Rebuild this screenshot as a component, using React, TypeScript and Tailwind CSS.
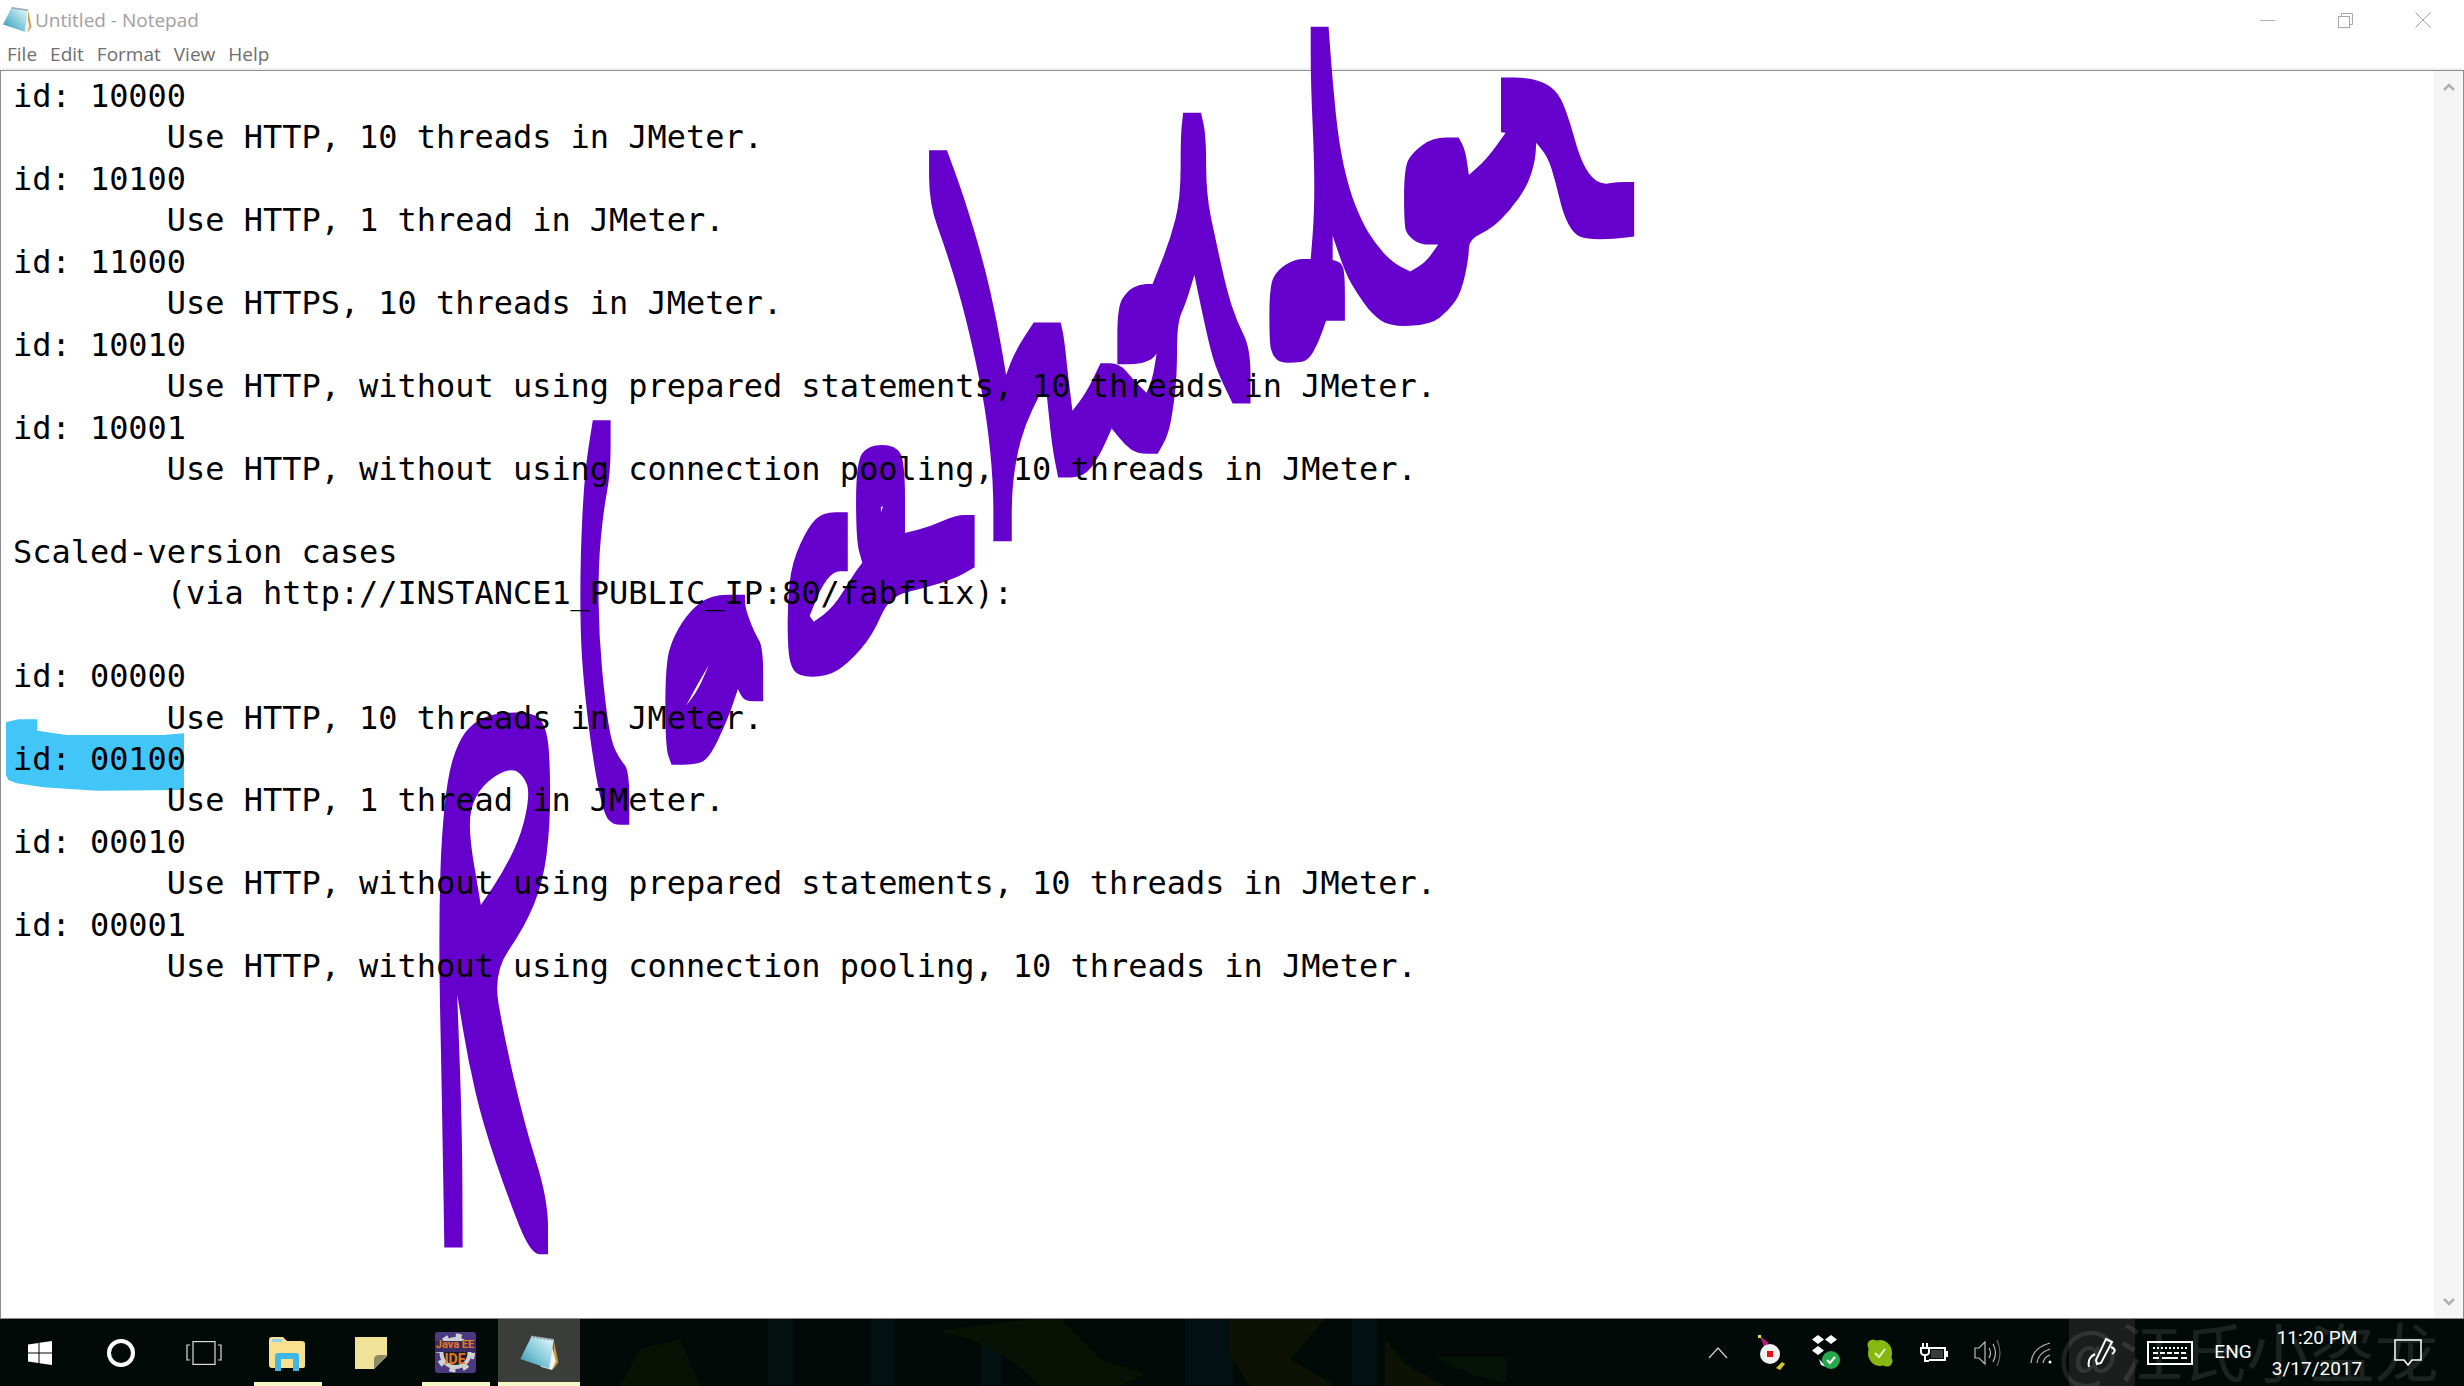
import React from "react";

const lines: string[] = [
  "id: 10000",
  "\tUse HTTP, 10 threads in JMeter.",
  "id: 10100",
  "\tUse HTTP, 1 thread in JMeter.",
  "id: 11000",
  "\tUse HTTPS, 10 threads in JMeter.",
  "id: 10010",
  "\tUse HTTP, without using prepared statements, 10 threads in JMeter.",
  "id: 10001",
  "\tUse HTTP, without using connection pooling, 10 threads in JMeter.",
  "",
  "Scaled-version cases",
  "\t(via http://INSTANCE1_PUBLIC_IP:80/fabflix):",
  "",
  "id: 00000",
  "\tUse HTTP, 10 threads in JMeter.",
  "id: 00100",
  "\tUse HTTP, 1 thread in JMeter.",
  "id: 00010",
  "\tUse HTTP, without using prepared statements, 10 threads in JMeter.",
  "id: 00001",
  "\tUse HTTP, without using connection pooling, 10 threads in JMeter.",
];

// Rounds the gentle bends of a hand-drawn outline, keeps its sharp corners.
function smooth(d: string): string {
  return d
    .split("Z")
    .filter((s) => s.trim())
    .map((sub) => {
      const n = (sub.match(/\d+/g) || []).map(Number);
      const pts: [number, number][] = [];
      for (let i = 0; i < n.length; i += 2) pts.push([n[i], n[i + 1]]);
      const c = pts.length;
      const mid = (a: [number, number], b: [number, number]) => `${(a[0] + b[0]) / 2} ${(a[1] + b[1]) / 2}`;
      let out = `M${mid(pts[c - 1], pts[0])}`;
      for (let i = 0; i < c; i++) {
        const a = pts[(i + c - 1) % c];
        const p = pts[i];
        const b = pts[(i + 1) % c];
        const v1 = [p[0] - a[0], p[1] - a[1]];
        const v2 = [b[0] - p[0], b[1] - p[1]];
        const cos = (v1[0] * v2[0] + v1[1] * v2[1]) / (Math.hypot(v1[0], v1[1]) * Math.hypot(v2[0], v2[1]) || 1);
        if (cos < 0.45) out += ` L${p[0]} ${p[1]} L${mid(p, b)}`;
        else out += ` Q${p[0]} ${p[1]} ${mid(p, b)}`;
      }
      return out + " Z";
    })
    .join(" ");
}

function NotepadIcon({ size, id }: { size: number; id: string }) {
  return (
    <svg width={size} height={size} viewBox="54 44 122 112">
      <defs>
        <linearGradient id={id} x1="0" y1="1" x2="1" y2="0">
          <stop offset="0" stopColor="#2f8fae" />
          <stop offset="0.45" stopColor="#7fc8d8" />
          <stop offset="1" stopColor="#eef9fb" />
        </linearGradient>
      </defs>
      <path d="M160 60 L174 128 L158 150 Z" fill="#c99a3e" />
      <path d="M150 60 L166 125 L155 152 L120 142 Z" fill="#f2f2f2" />
      <path d="M92 50 L160 60 L146 148 L58 118 Z" fill={`url(#${id})`} />
      <path d="M92 50 L160 60" stroke="#8d99a6" strokeWidth="6" />
      <path d="M92 50 L160 60" stroke="#e8e8e8" strokeWidth="3" strokeDasharray="4 7" />
    </svg>
  );
}

function Ink() {
  return (
    <svg className="absolute left-0 top-0 z-0" width="2464" height="1386" viewBox="0 0 2464 1386">
      <path
        transform="translate(0 700) scale(0.3333)"
        fill="#41c6f7"
        d="M18 67 L55 58 L112 58 L112 92 L200 105 L490 105 L552 100 L552 270 L290 272 L130 262 L50 250 L25 240 L18 225 Z"
      />
      <g transform="translate(900 0) scale(0.5102 0.3571)" fill="#6600cc">
        <path d={smooth("M57 421 L92 421 L125 550 L165 740 L190 900 L208 1050 L225 985 L262 903 L315 903 L322 950 L330 1060 L338 1150 L365 1100 L393 1017 L430 1017 L455 1060 L483 1100 L495 1060 L503 990 L495 1005 L470 1020 L426 1020 L426 860 L445 815 L470 795 L495 795 L530 670 L550 555 L550 380 L555 316 L590 316 L600 380 L600 545 L620 680 L640 810 L660 900 L687 975 L687 1130 L652 1130 L625 1050 L610 990 L590 860 L577 770 L560 850 L543 905 L543 1050 L535 1150 L525 1220 L505 1271 L465 1271 L440 1245 L415 1200 L390 1280 L360 1337 L310 1337 L298 1250 L288 1110 L272 1110 L245 1190 L228 1280 L219 1380 L219 1516 L183 1516 L183 1350 L170 1170 L150 1020 L122 850 L90 700 L57 570 Z")} />
        <path d={smooth("M724 800 L740 755 L775 725 L805 725 L812 600 L812 450 L805 230 L805 75 L840 75 L848 230 L860 400 L880 530 L905 620 L930 680 L965 735 L1000 760 L1030 735 L1055 685 L1020 685 L995 660 L988 630 L988 470 L1005 425 L1045 385 L1095 385 L1108 420 L1115 490 L1150 445 L1187 372 L1178 370 L1178 217 L1230 217 L1270 235 L1295 270 L1315 350 L1330 430 L1350 490 L1375 517 L1405 510 L1439 510 L1439 662 L1400 670 L1345 670 L1320 655 L1300 600 L1285 510 L1270 440 L1247 400 L1245 450 L1230 520 L1195 590 L1160 640 L1115 670 L1115 720 L1100 820 L1075 870 L1040 910 L960 915 L925 880 L895 820 L873 765 L848 660 L848 728 L865 735 L872 765 L872 898 L835 898 L820 960 L800 1010 L775 1016 L745 1016 L730 995 L724 960 Z")} />
      </g>
      <g transform="translate(400 400) scale(0.4146 0.5612)" fill="#6600cc" fillRule="evenodd">
        <path d={smooth("M465 36 L508 36 L508 130 L490 200 L478 300 L480 420 L495 540 L510 610 L530 640 L553 660 L553 757 L512 757 L490 735 L465 640 L445 520 L435 420 L435 280 L445 130 Z")} />
        <path d={smooth("M640 470 L660 420 L700 375 L750 347 L832 347 L832 370 L855 415 L876 440 L876 537 L830 537 L815 515 L790 570 L745 640 L710 650 L655 650 L640 620 Z M745 472 L715 510 L690 545 L720 515 Z")} />
        <path d={smooth("M935 360 L945 290 L985 225 L1020 200 L1080 200 L1080 305 L1045 305 L1015 335 L988 385 L998 395 L1045 370 L1095 310 L1115 290 L1100 250 L1100 110 L1130 80 L1195 80 L1218 110 L1218 237 L1280 225 L1340 205 L1386 205 L1386 298 L1340 318 L1265 335 L1180 350 L1140 420 L1080 470 L1030 493 L960 493 L940 470 L935 430 Z M1160 190 L1165 190 L1160 200 Z")} />
        <path d={smooth("M107 1510 L100 1200 L95 1030 L95 900 L100 780 L115 670 L140 610 L175 575 L230 557 L330 557 L355 590 L362 650 L362 760 L345 860 L300 940 L225 1020 L250 1130 L300 1290 L357 1425 L357 1522 L315 1522 L260 1420 L200 1290 L165 1180 L138 1060 L150 1300 L151 1510 Z M163 760 L180 705 L225 670 L273 656 L300 672 L313 700 L295 770 L250 840 L195 900 Z")} />
      </g>
    </svg>
  );
}

function Wallpaper() {
  return (
    <svg className="absolute left-0 top-0 opacity-60" width="2464" height="67" viewBox="0 0 2464 67">
      <g fill="#04141a">
        <rect x="768" y="0" width="25" height="67" />
        <rect x="870" y="0" width="24" height="67" />
        <rect x="981" y="10" width="21" height="57" />
        <rect x="1185" y="0" width="48" height="67" />
        <rect x="1352" y="0" width="25" height="67" />
      </g>
      <g fill="#0b1703">
        <path d="M936 12 L1030 0 L1060 0 L1100 40 L1146 55 L1120 67 L1040 67 L1010 40 L970 20 Z" />
        <path d="M640 30 L680 20 L700 67 L620 67 Z" />
      </g>
      <g fill="#151803">
        <path d="M1230 0 L1325 0 L1290 40 L1335 67 L1250 67 L1230 35 Z" />
        <path d="M1385 20 L1405 45 L1445 67 L1385 67 Z" />
      </g>
      <path d="M1433 38 L1506 38 L1506 64 L1470 55 Z" fill="#06180a" />
    </svg>
  );
}

function TaskButton({ active, underline, children }: { active?: boolean; underline?: boolean; children: React.ReactNode }) {
  return (
    <div className={active ? "relative flex h-full w-[82px] items-center justify-center bg-[#3a3d3a]" : "relative flex h-full w-[82px] items-center justify-center"}>
      {children}
      {underline && (
        <div className={active ? "absolute bottom-0 left-0 right-0 h-[4px] bg-[#f7f7c4]" : "absolute bottom-0 left-[8px] right-[6px] h-[4px] bg-[#f7f7c4]"} />
      )}
    </div>
  );
}

function TrayItem({ children }: { children: React.ReactNode }) {
  return <div className="flex h-full w-[54px] items-center justify-center">{children}</div>;
}

function Taskbar() {
  return (
    <div className="relative flex h-[67px] shrink-0 items-center overflow-hidden bg-[#010a06]" style={{ fontFamily: '"Roboto", "Noto Sans", sans-serif' }}>
      <Wallpaper />
      <div className="z-10 flex h-full w-[80px] items-center justify-center">
        <svg width="24" height="24" viewBox="0 0 24 24" fill="#fff">
          <path d="M0 3.5 L10.5 2 V11.5 H0 Z M11.5 1.8 L24 0 V11.5 H11.5 Z M0 12.5 H10.5 V22 L0 20.5 Z M11.5 12.5 H24 V24 L11.5 22.2 Z" />
        </svg>
      </div>
      <div className="z-10 flex h-full w-[82px] items-center justify-center">
        <div className="h-[28px] w-[28px] rounded-full border-[4px] border-white" />
      </div>
      <div className="z-10 flex h-full w-[84px] items-center justify-center">
        <svg width="36" height="24" viewBox="0 0 36 24" fill="none" stroke="#ddd" strokeWidth="1.2">
          <rect x="7" y="0.6" width="22" height="22.8" />
          <path d="M4 4 H1 V19 H4 M32 4 H35 V19 H32" />
        </svg>
      </div>
      <div className="z-10 flex h-full gap-[2px]">
        <TaskButton underline>
          <svg width="36" height="36" viewBox="0 0 36 36">
            <path d="M0 5 Q0 2 3 2 H14 L18 6 H33 Q36 6 36 9 V31 Q36 33 33 33 H3 Q0 33 0 30 Z" fill="#f9e08e" />
            <rect x="3" y="4" width="10" height="3" fill="#8fd3f0" />
            <path d="M6 36 V21 Q6 18 9 18 H27 Q30 18 30 21 V36 H24 V24 H12 V36 Z" fill="#3fb5e8" />
          </svg>
        </TaskButton>
        <TaskButton>
          <svg width="32" height="32" viewBox="0 0 32 32">
            <path d="M0 0 H32 V19 L19 32 H0 Z" fill="#f0e297" />
            <path d="M32 18 L19 32 V23 Q19 18 24 18 Z" fill="#8c8a62" />
          </svg>
        </TaskButton>
        <TaskButton underline>
          <div className="relative flex h-[41px] w-[41px] flex-col items-center justify-center overflow-hidden rounded-[3px] bg-[#4c3a80] font-bold text-[#e8781e]">
            <svg className="absolute left-0 top-0" width="41" height="41" viewBox="0 0 41 41" fill="none">
              <circle cx="20.5" cy="21" r="14" fill="#1c1c24" stroke="#d0d0d0" strokeWidth="4" />
              <circle cx="20.5" cy="21" r="17.5" stroke="#d0d0d0" strokeWidth="4" strokeDasharray="6 7.7" />
              <rect x="0" y="9" width="41" height="11" fill="#3a2c66" />
            </svg>
            <span className="relative whitespace-nowrap text-[11px] leading-[14px]">Java EE</span>
            <span className="relative text-[14px] leading-[15px]">IDE</span>
          </div>
        </TaskButton>
        <TaskButton active underline>
          <NotepadIcon size={40} id="npTask" />
        </TaskButton>
      </div>
      <div className="flex-1" />
      <div className="z-10 flex h-full items-center pr-[21px] text-white">
        <TrayItem>
          <svg width="20" height="12" viewBox="0 0 20 12" fill="none" stroke="#ccc" strokeWidth="1.3">
            <path d="M1 11 L10 1 L19 11" />
          </svg>
        </TrayItem>
        <TrayItem>
          <svg width="28" height="36" viewBox="0 0 28 36">
            <path d="M2 1 L11 8 L6 12 Z" fill="#a8206e" />
            <rect x="0" y="0" width="3" height="3" fill="#f0e030" />
            <circle cx="12" cy="19" r="10" fill="#f2f2f2" />
            <rect x="9" y="16" width="6" height="6" fill="#e81010" />
            <path d="M18 33 L24 27 L27 29 L22 35 Z" fill="#d8c820" />
          </svg>
        </TrayItem>
        <TrayItem>
          <svg width="30" height="38" viewBox="0 0 30 38">
            <path d="M7 1 L13 5.5 L7 10 L1 5.5 Z M20 1 L26 5.5 L20 10 L14 5.5 Z M7 12 L13 16.5 L7 21 L1 16.5 Z M8 25 L13 30 L15 33 L10 31 Z" fill="#fff" />
            <circle cx="20" cy="26" r="9" fill="#27a84a" />
            <path d="M16 26 L19 29 L24 23" fill="none" stroke="#fff" strokeWidth="2" />
          </svg>
        </TrayItem>
        <TrayItem>
          <svg width="26" height="28" viewBox="0 0 26 28">
            <ellipse cx="13" cy="14" rx="12" ry="13" fill="#86b80f" />
            <circle cx="6" cy="6" r="5.5" fill="#86b80f" />
            <circle cx="20" cy="22" r="5.5" fill="#86b80f" />
            <path d="M8 14 L12 18 L18 10" fill="none" stroke="#e8f4d0" strokeWidth="2" />
          </svg>
        </TrayItem>
        <TrayItem>
          <svg width="28" height="20" viewBox="0 0 28 20" fill="none" stroke="#fff" strokeWidth="2">
            <path d="M3 0 V5 M7 0 V5" />
            <path d="M1 5 H9 V9 Q9 12 5 12 Q1 12 1 9 Z" />
            <path d="M5 12 V18 H9" />
            <path d="M8 5 H25 V17 H9" />
            <rect x="25" y="8" width="3" height="6" fill="#fff" stroke="none" />
            <rect x="11" y="7" width="12" height="8" fill="#888" stroke="none" opacity="0.4" />
          </svg>
        </TrayItem>
        <TrayItem>
          <svg width="28" height="30" viewBox="0 0 28 30" fill="none" stroke="#bbb" strokeWidth="1.2">
            <path d="M1 10 H5 L11 4 V26 L5 20 H1 Z" />
            <path d="M15 10 Q18 15 15 20 M19 6 Q24 15 19 24" />
            <path d="M23 2 Q29 15 23 28" stroke="#666" />
          </svg>
        </TrayItem>
        <TrayItem>
          <svg width="24" height="22" viewBox="0 0 24 22" fill="none" stroke="#bbb" strokeWidth="1.2">
            <path d="M1 21 Q2 6 20 1" />
            <path d="M7 21 Q8 11 20 7" />
            <path d="M13 21 Q14 15 20 13" />
            <circle cx="20" cy="20" r="1.5" fill="#fff" stroke="none" />
          </svg>
        </TrayItem>
        <div className="flex h-full w-[66px] items-center justify-center bg-[#1b1e1c]">
          <svg width="32" height="32" viewBox="0 0 32 32" fill="none" stroke="#fff" strokeWidth="2">
            <path d="M20 2 L26 5 L15 26 L11 27 L10 23 Z" />
            <path d="M25 10 Q32 13 26 17" />
            <path d="M9 17 Q1 21 3 30" />
          </svg>
        </div>
        <div className="flex h-full w-[70px] items-center justify-center">
          <svg width="46" height="24" viewBox="0 0 46 24" fill="none" stroke="#fff">
            <rect x="1" y="1" width="44" height="22" strokeWidth="2" />
            <path d="M6 7 H40" strokeWidth="2" strokeDasharray="2 2" />
            <path d="M6 12 H40" strokeWidth="2" strokeDasharray="5 2" />
            <path d="M6 17 H12 M15 17 H31 M34 17 H40" strokeWidth="2" />
          </svg>
        </div>
        <div className="flex h-full w-[56px] items-center justify-center text-[19px]">ENG</div>
        <div className="flex h-full w-[112px] flex-col items-center justify-center text-[19px] leading-[31px]">
          <span>11:20 PM</span>
          <span>3/17/2017</span>
        </div>
        <div className="flex h-full w-[70px] items-center justify-center">
          <svg width="28" height="28" viewBox="0 0 28 28" fill="none" stroke="#fff" strokeWidth="1.5">
            <path d="M1 1 H27 V21 H18 L14 26 L10 21 H1 Z" />
          </svg>
        </div>
      </div>
      <div className="absolute left-[2058px] top-0 z-20 whitespace-nowrap text-[64px] leading-[60px] text-white/10" style={{ fontFamily: '"Noto Sans CJK SC", sans-serif' }}>
        @江氏小盗龙
      </div>
    </div>
  );
}

export default function App() {
  return (
    <div className="relative flex h-[1386px] w-[2464px] flex-col overflow-hidden bg-white" style={{ fontFamily: '"Open Sans", "Noto Sans", sans-serif' }}>
      <div className="flex h-[40px] shrink-0 items-center justify-between">
        <div className="flex items-center gap-[3px] pl-[2px] text-[19px] text-[#a0a0a0]">
          <NotepadIcon size={30} id="npTitle" />
          <span>Untitled - Notepad</span>
        </div>
        <div className="flex items-center pr-[2px]">
          <div className="flex w-[78px] justify-center">
            <div className="h-[1px] w-[15px] bg-[#b0b0b0]" />
          </div>
          <div className="flex w-[78px] justify-center">
            <svg width="15" height="15" viewBox="0 0 15 15" fill="none" stroke="#a8a8a8">
              <rect x="0.5" y="3.5" width="11" height="11" />
              <path d="M3.5 3.5 V0.5 H14.5 V11.5 H11.5" />
            </svg>
          </div>
          <div className="flex w-[78px] justify-center">
            <svg width="16" height="16" viewBox="0 0 16 16" fill="none" stroke="#a8a8a8">
              <path d="M0.5 0.5 L15.5 15.5 M15.5 0.5 L0.5 15.5" />
            </svg>
          </div>
        </div>
      </div>
      <div className="flex h-[30px] shrink-0 items-center gap-[13px] border-b-[2px] border-[#f0f0f0] pl-[7px] text-[19px] text-[#6e6e6e]">
        <span>File</span>
        <span>Edit</span>
        <span>Format</span>
        <span>View</span>
        <span>Help</span>
      </div>
      <div className="flex min-h-0 flex-1 border-x border-y border-[#8c8c8c]">
        <div
          className="relative z-10 flex-1 whitespace-pre pl-[12px] pt-[5px] text-[31.95px] leading-[41.45px] text-black"
          style={{ fontFamily: '"DejaVu Sans Mono", monospace', tabSize: 8 }}
        >
          {lines.map((l, i) => (
            <div key={i} className="h-[41.45px]">
              {l}
            </div>
          ))}
        </div>
        <div className="z-10 flex w-[29px] shrink-0 flex-col items-center justify-between bg-[#f5f5f5] py-[12px]">
          <svg width="12" height="8" viewBox="0 0 12 8" fill="none" stroke="#b0b0b0" strokeWidth="2.5">
            <path d="M1 7 L6 2 L11 7" />
          </svg>
          <svg width="12" height="8" viewBox="0 0 12 8" fill="none" stroke="#b0b0b0" strokeWidth="2.5">
            <path d="M1 1 L6 6 L11 1" />
          </svg>
        </div>
      </div>
      <Taskbar />
      <Ink />
    </div>
  );
}
